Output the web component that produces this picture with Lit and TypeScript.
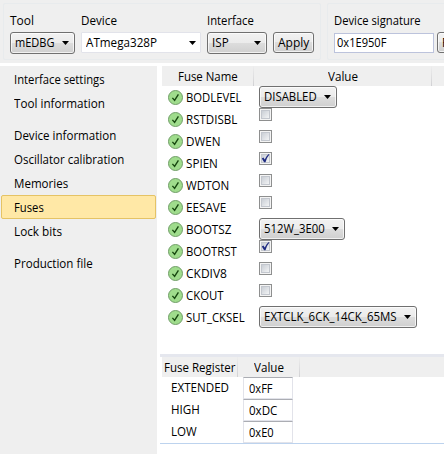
import { LitElement, html, css, svg, nothing } from "lit";
import { customElement, property, query } from "lit/decorators.js";
import { styleMap } from "lit/directives/style-map.js";

/** Single line of text condensed or widened to a given width. */
@customElement("fit-text")
class FitText extends LitElement {
  @property({ type: Number }) w = 0;
  @property() text = "";
  @query(".t") inner!: HTMLElement;
  static styles = css`
    :host { display: block; flex: none; height: 16px; line-height: 16px; white-space: nowrap; }
    .t { display: inline-block; transform-origin: 0 50%; }
  `;
  render() { return html`<span class="t">${this.text}</span>`; }
  updated() {
    this.style.width = this.w + "px";
    this.inner.style.transform = `scaleX(${this.w / this.inner.offsetWidth})`;
  }
}

@customElement("combo-box")
class ComboBox extends LitElement {
  @property() text = "";
  @property({ type: Number }) tw = 0;
  @property({ type: Boolean, reflect: true }) plain = false;
  @property({ type: Boolean, reflect: true }) button = false;
  static styles = css`
    :host {
      display: flex; align-items: center; justify-content: space-between; flex: none;
      box-sizing: border-box; height: 22px; padding: 0 5px 0 4px;
      border: 1px solid #707070; border-radius: 3px;
      background: linear-gradient(#f2f2f2, #ebebeb 49%, #dddddd 50%, #cfcfcf);
      box-shadow: inset 0 0 0 1px rgba(255, 255, 255, .7);
    }
    :host([plain]) { height: 21px; background: #fff; border-color: #e2e3ea; border-radius: 1px; padding-right: 4px; }
    :host([button]) { height: 21px; }
    .arrow { display: block; flex: none; }
  `;
  render() {
    return html`<fit-text .text=${this.text} .w=${this.tw}></fit-text>
      ${this.button ? nothing : html`<svg class="arrow" width="7" height="4" viewBox="0 0 7 4">${svg`<path d="M0 0H7L3.5 4Z" fill="#000"/>`}</svg>`}`;
  }
}

type Fuse = { name: string; w: number; on?: boolean; value?: string; vw?: number; cw?: number };

const fuses: Fuse[] = [
  { name: "BODLEVEL", w: 55.5, value: "DISABLED", vw: 53, cw: 78 },
  { name: "RSTDISBL", w: 51 },
  { name: "DWEN", w: 35 },
  { name: "SPIEN", w: 32, on: true },
  { name: "WDTON", w: 43.5 },
  { name: "EESAVE", w: 40 },
  { name: "BOOTSZ", w: 45, value: "512W_3E00", vw: 60.5, cw: 86 },
  { name: "BOOTRST", w: 51, on: true },
  { name: "CKDIV8", w: 41 },
  { name: "CKOUT", w: 38 },
  { name: "SUT_CKSEL", w: 59, value: "EXTCLK_6CK_14CK_65MS", vw: 133, cw: 158 },
];

const menu: [string, number, boolean?][][] = [
  [["Interface settings", 91], ["Tool information", 90.5]],
  [["Device information", 102], ["Oscillator calibration", 110], ["Memories", 54], ["Fuses", 30, true], ["Lock bits", 48]],
  [["Production file", 79]],
];

const registers: [string, number, string, number][] = [
  ["EXTENDED", 58, "0xFF", 24],
  ["HIGH", 29, "0xDC", 28],
  ["LOW", 26, "0xE0", 25],
];

@customElement("app-root")
class AppRoot extends LitElement {
  static styles = css`
    :host {
      display: flex; flex-direction: column; width: 444px; height: 454px; overflow: hidden;
      background: #fff; color: #000; font: 12px/16px "Open Sans", "Noto Sans", sans-serif;
    }
    .top { display: flex; gap: 6px; flex: none; height: 63px; box-sizing: border-box; padding: 3px 0 3px 3px; background: #efefef; }
    .group { display: flex; gap: 6px; flex: none; box-sizing: border-box; height: 57px; border: 1px solid #e8ebed; border-radius: 2px; padding: 9px 6px 0; }
    .group.sig { width: 130px; gap: 3px; }
    .field { display: flex; flex-direction: column; gap: 3px; flex: none; }
    .end { margin-top: 19px; }
    .field combo-box { height: 22px; margin-top: 0; }
    .device combo-box { height: 21px; }
    .sigbox { box-sizing: border-box; width: 100px; height: 20px; margin-top: 1px; border: 1px solid #bcc3dc; background: #fff; padding: 1px 2px; }
    .main { display: flex; gap: 5px; flex: 1; margin-top: 3px; min-height: 0; }
    .side { display: flex; flex-direction: column; gap: 8px; flex: none; box-sizing: border-box; width: 157px; padding: 1px; background: #efefef; }
    .item { box-sizing: border-box; height: 24px; width: 155px; padding: 4px 12px 2px; border: 1px solid transparent; border-radius: 2px; }
    .item.sel { background: #ffe8a6; border-color: #e5c365; }
    .content { flex: 1; min-width: 0; display: flex; flex-direction: column; }
    .head { display: flex; height: 20px; flex: none; background: #efefef; }
    .cell { display: flex; justify-content: center; box-sizing: border-box; padding-top: 3px; flex: none; border-right: 1px solid;
      border-image: linear-gradient(#efefef, #cfcfd2) 1; }
    .c1 { width: 92px; } .c2 { width: 178px; } .r1 { width: 76px; } .r2 { width: 62px; }
    .row { display: flex; height: 22px; padding-left: 6px; }
    .name { display: flex; align-items: center; gap: 3px; width: 91px; }
    .name fit-text { margin-top: 1px; }
    .ok, .box { display: block; flex: none; }
    .regs { margin-top: 26px; margin-left: -2px; border-top: 3px solid #e5e7ee; border-bottom: 1px solid #bdd3ee; }
    .regs .head { margin-left: 2px; }
    .rrow { display: flex; height: 22px; padding-left: 11px; }
    .rname { width: 72px; padding-top: 3px; }
    .rval { box-sizing: border-box; width: 50px; height: 22px; padding: 3px 5px 0; border: 1px solid #e2e3ea; border-top-color: #abadb3; }
  `;

  private icon() {
    return html`<svg class="ok" width="15" height="15" viewBox="0 0 15 15">
      <circle cx="7.5" cy="7.5" r="7" fill="#9fdc8c" stroke="#729e69"/>
      <path d="M4.4 7.9L6.6 10.4L10.4 4.3" fill="none" stroke="#17470f" stroke-width="1.4"/>
    </svg>`;
  }

  private check(on = false) {
    return html`<svg class="box" width="13" height="13" viewBox="0 0 13 13">
      <defs><linearGradient id="g" x1="0" y1="0" x2="1" y2="1"><stop offset="0" stop-color="#c7ccd3"/><stop offset="1" stop-color="#f5f6f7"/></linearGradient></defs>
      <rect x=".5" y=".5" width="12" height="12" fill="#f4f4f4" stroke="#8e8f8f"/>
      <rect x="2.5" y="2.5" width="8" height="8" fill="url(#g)" stroke="#c3c7ce"/>
      ${on ? svg`<path d="M2.8 6.4L4.4 5.4L5.7 7.6Q7 4 9.8 2L10.4 2.6Q7.8 5.5 6.5 10.2H5.1Z" fill="#1e2a80"/>` : nothing}
    </svg>`;
  }

  private field(label: string, lw: number, cls: string, text: string, tw: number, width: number) {
    return html`<div class="field ${cls}">
      <fit-text .text=${label} .w=${lw}></fit-text>
      <combo-box ?plain=${cls === "device"} .text=${text} .tw=${tw} style=${styleMap({ width: width + "px" })}></combo-box>
    </div>`;
  }

  render() {
    return html`
      <div class="top">
        <div class="group">
          ${this.field("Tool", 24, "", "mEDBG", 39.5, 65)}
          ${this.field("Device", 36, "device", "ATmega328P", 71, 120)}
          ${this.field("Interface", 47, "", "ISP", 16.5, 60)}
          <combo-box class="end" button .text=${"Apply"} .tw=${31} style=${styleMap({ width: "41px" })}></combo-box>
        </div>
        <div class="group sig">
          <div class="field">
            <fit-text .text=${"Device signature"} .w=${87}></fit-text>
            <div class="sigbox"><fit-text .text=${"0x1E950F"} .w=${49}></fit-text></div>
          </div>
          <combo-box class="end" button .text=${"Read"} .tw=${27} style=${styleMap({ width: "40px" })}></combo-box>
        </div>
      </div>
      <div class="main">
        <div class="side">
          ${menu.map(g => html`<div>${g.map(([t, w, sel]) => html`<div class="item ${sel ? "sel" : ""}"><fit-text .text=${t} .w=${w}></fit-text></div>`)}</div>`)}
        </div>
        <div class="content">
          <div class="head">
            <div class="cell c1"><fit-text .text=${"Fuse Name"} .w=${60}></fit-text></div>
            <div class="cell c2"><fit-text .text=${"Value"} .w=${30}></fit-text></div>
          </div>
          ${fuses.map(f => html`<div class="row">
            <div class="name">${this.icon()}<fit-text .text=${f.name} .w=${f.w}></fit-text></div>
            ${f.value ? html`<combo-box .text=${f.value} .tw=${f.vw!} style=${styleMap({ width: f.cw + "px" })}></combo-box>` : this.check(f.on)}
          </div>`)}
          <div class="regs">
            <div class="head">
              <div class="cell r1"><fit-text .text=${"Fuse Register"} .w=${71}></fit-text></div>
              <div class="cell r2"><fit-text .text=${"Value"} .w=${30}></fit-text></div>
            </div>
            ${registers.map(([n, w, v, vw]) => html`<div class="rrow">
              <div class="rname"><fit-text .text=${n} .w=${w}></fit-text></div>
              <div class="rval"><fit-text .text=${v} .w=${vw}></fit-text></div>
            </div>`)}
          </div>
        </div>
      </div>`;
  }
}
